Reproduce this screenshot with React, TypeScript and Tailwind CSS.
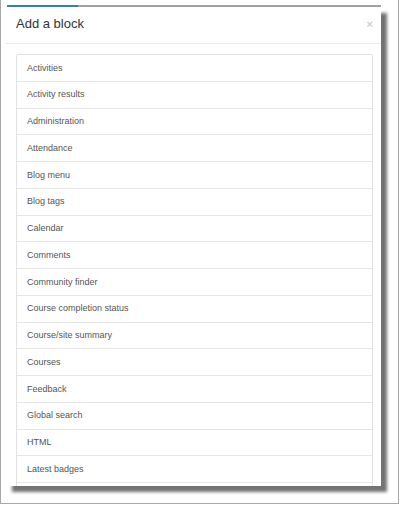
import React from 'react';

const blocks = [
  'Activities',
  'Activity results',
  'Administration',
  'Attendance',
  'Blog menu',
  'Blog tags',
  'Calendar',
  'Comments',
  'Community finder',
  'Course completion status',
  'Course/site summary',
  'Courses',
  'Feedback',
  'Global search',
  'HTML',
  'Latest badges',
];

const App: React.FC = () => {
  return (
    <div className="w-[401px] h-[506px] bg-white font-['Liberation_Sans',Arial,sans-serif]">
      <div className="w-[399px] h-[504px] border-l border-r border-b border-[#a8a8a8] pt-[5px]">
        {/* strip of the page behind the dialog */}
        <div className="flex ml-[6px] w-[374px] h-[2px]">
          <div className="w-[71px] bg-[#3a8393]" />
          <div className="flex-1 bg-[#a0a0a0]" />
        </div>

        {/* dialog */}
        <div className="ml-[5px] w-[375px] h-[479px] bg-white overflow-hidden flex flex-col shadow-[6px_6px_3px_rgba(0,0,0,0.55)]">
          <div className="relative h-[37px] shrink-0 border-b border-[#ececec] pl-[10px] pt-[9px]">
            <h4 className="text-[13px] leading-[15px] text-[#333]">Add a block</h4>
            <span className="absolute right-[8px] top-[12px] text-[11px] leading-none font-bold text-[#cfcfcf]">×</span>
          </div>
          <div className="pl-[10px] pr-[8px] pt-[10px]">
            <ul className="border border-[#e2e2e2] rounded-[2px]">
              {blocks.map((b) => (
                <li
                  key={b}
                  className="h-[26.75px] flex items-center pl-[10px] pt-px text-[9px] text-[#555] border-b border-[#e6e6e6]"
                >
                  {b}
                </li>
              ))}
              <li className="h-[20px]" />
            </ul>
          </div>
        </div>
      </div>
    </div>
  );
};

export default App;
